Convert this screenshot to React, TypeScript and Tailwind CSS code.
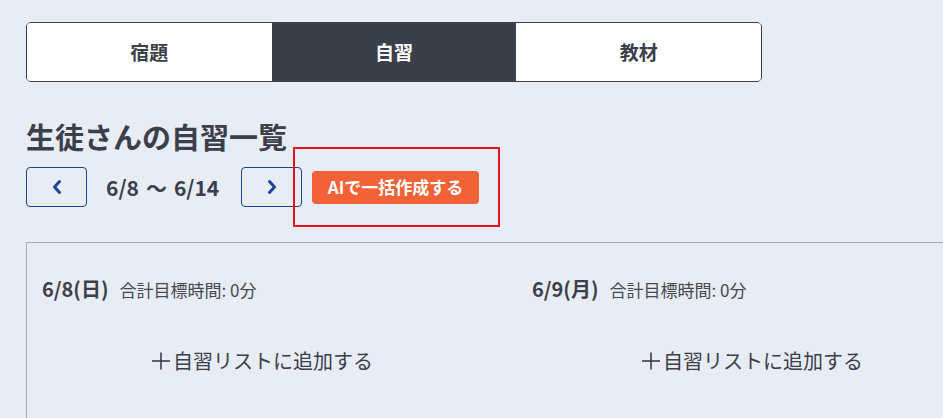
import {FC} from 'react';

const font = {fontFamily: '"Noto Sans CJK JP", "Noto Sans", sans-serif'};

const tabs = [
  {label: '宿題', active: false},
  {label: '自習', active: true},
  {label: '教材', active: false},
];

const days = [
  {date: '6/8(日)', total: '合計目標時間: 0分'},
  {date: '6/9(月)', total: '合計目標時間: 0分'},
];

const Chevron: FC<{dir: 'left' | 'right'}> = ({dir}) => (
  <svg width="20" height="20" viewBox="0 0 20 20" fill="none" stroke="#1d4496" strokeWidth="3" strokeLinecap="round" strokeLinejoin="round">
    {dir === 'left' ? <polyline points="12.5,4.5 7.5,10 12.5,15.5" /> : <polyline points="7.5,4.5 12.5,10 7.5,15.5" />}
  </svg>
);

const PlusIcon: FC = () => (
  <svg width="19" height="20" viewBox="0 0 19 20" fill="none" stroke="#3b3f4a" strokeWidth="1.6">
    <line x1="1" y1="10" x2="19" y2="10" />
    <line x1="10" y1="1.5" x2="10" y2="18.5" />
  </svg>
);

const NavButton: FC<{dir: 'left' | 'right'}> = ({dir}) => (
  <button className="flex h-[40px] w-[61px] items-center justify-center rounded-[4px] border border-[#1d4496] bg-transparent">
    <Chevron dir={dir} />
  </button>
);

export default function App() {
  return (
    <div className="h-[418px] w-[943px] overflow-hidden bg-[#e8ecf5] pl-[26px] pt-[22px] text-[#3b3f4a]" style={font}>
      {/* tabs */}
      <div className="flex h-[60px] w-[736px] overflow-hidden rounded-[5px] border border-[#3b3f4a]">
        {tabs.map((t) => (
          <div
            key={t.label}
            className={
              t.active
                ? 'flex flex-1 items-center justify-center bg-[#3b3f4a] text-[19px] font-bold text-white'
                : 'flex flex-1 items-center justify-center bg-white text-[19px] font-bold text-[#3b3f4a]'
            }
          >
            {t.label}
          </div>
        ))}
      </div>

      <h1 className="mt-[32px] text-[29px] font-bold leading-[44px]">生徒さんの自習一覧</h1>

      {/* week nav */}
      <div className="relative mt-[9px] flex h-[40px] items-center">
        <NavButton dir="left" />
        <div className="ml-[19px] mr-[18px] flex w-[117px] items-center whitespace-nowrap text-[21px] font-bold leading-[28px]">
          <span>6/8</span>
          <span className="ml-[7px] mr-[7px]">〜</span>
          <span>6/14</span>
        </div>
        <NavButton dir="right" />
        <button className="ml-[10px] flex h-[33px] w-[167px] items-center justify-center rounded-[4px] bg-[#f26236] text-[17px] font-bold text-white">
          AIで一括作成する
        </button>
        <div className="pointer-events-none absolute left-[267px] top-[-20px] h-[80px] w-[207px] border-2 border-[#e3161e]" />
      </div>

      {/* day columns */}
      <div className="mt-[35px] h-[220px] w-[1100px] border border-[#a9aeb8]">
        <div className="grid grid-cols-[470px_470px] gap-x-[20px] pt-[32px]">
          {days.map((d) => (
            <div key={d.date} className="flex flex-col">
              <div className="flex items-baseline pl-[15px] leading-[28px]">
                <span className="text-[20px] font-bold">{d.date}</span>
                <span className="ml-[11px] text-[17px] text-[#45494f]">{d.total}</span>
              </div>
              <button className="mt-[42px] flex items-center justify-center gap-[3px] text-[20px] leading-[30px] text-[#3b3f4a]">
                <PlusIcon />
                <span>自習リストに追加する</span>
              </button>
            </div>
          ))}
        </div>
      </div>
    </div>
  );
}
